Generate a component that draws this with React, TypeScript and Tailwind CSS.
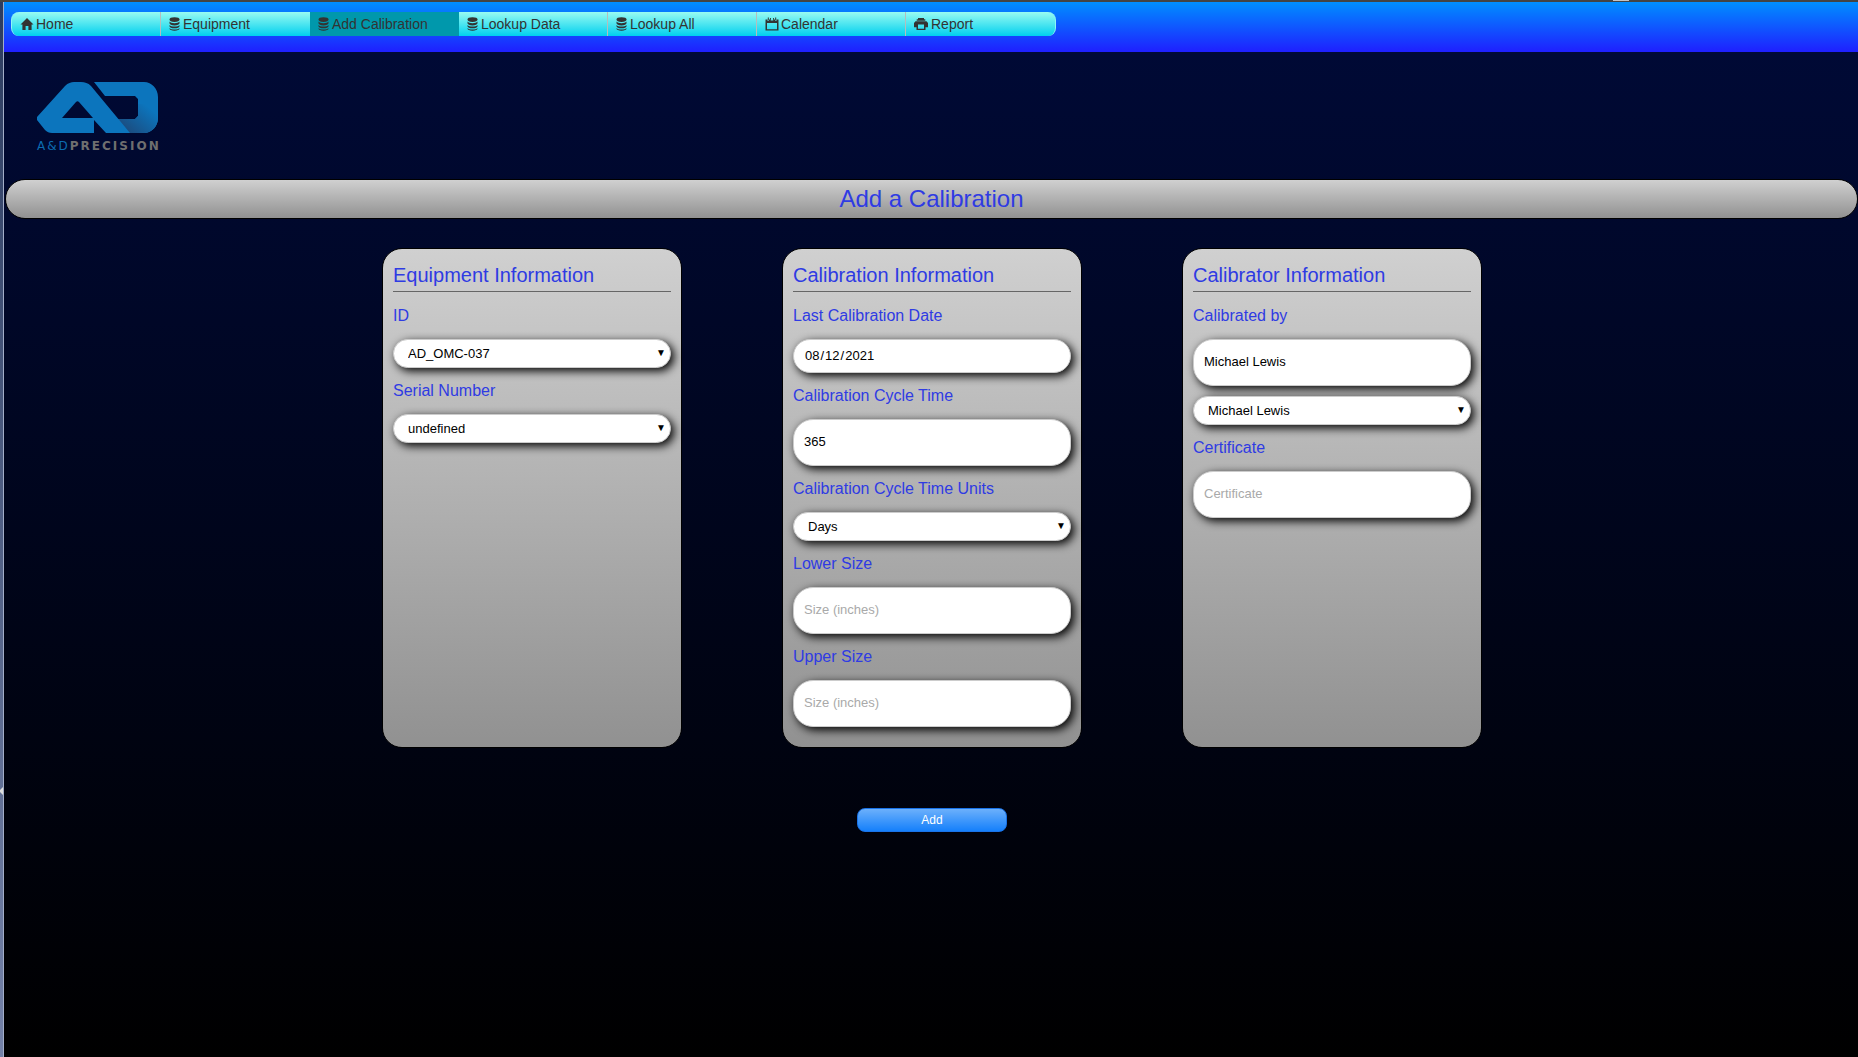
import React from 'react';

type IconName = 'home' | 'database' | 'calendar' | 'print';

function NavIcon({ name }: { name: IconName }) {
  if (name === 'home') {
    return (
      <svg className="h-[14px] w-[14px] shrink-0" viewBox="0 0 14 14" fill="currentColor" aria-hidden="true">
        <path d="M7 1 0.5 7.6h1.9V13h3.2V9h2.8v4h3.2V7.6h1.9z" />
      </svg>
    );
  }
  if (name === 'database') {
    return (
      <svg className="h-[14px] w-[12px] shrink-0" viewBox="0 0 12 14" fill="currentColor" aria-hidden="true">
        <ellipse cx="5.500" cy="2.600" rx="5" ry="2.300" />
        <path d="M.5 4.600c.8 1.100 2.800 1.600 5 1.600s4.200-.5 5-1.600v1.700c0 1.200-2.200 2.100-5 2.100s-5-.9-5-2.100z" />
        <path d="M.5 8c.8 1.100 2.800 1.600 5 1.600s4.200-.5 5-1.600v1.200c0 1.200-2.200 2.100-5 2.100s-5-.9-5-2.100z" />
        <path d="M.5 10.900c.8 1.100 2.800 1.500 5 1.500s4.200-.4 5-1.500v.7c0 1.300-2.200 2.200-5 2.200s-5-.9-5-2.200z" />
      </svg>
    );
  }
  if (name === 'calendar') {
    return (
      <svg className="h-[14px] w-[14px] shrink-0" viewBox="0 0 14 14" fill="currentColor" aria-hidden="true">
        <path
          fillRule="evenodd"
          d="M.5 2.500h2V4h1.500V2.500h1.700V3.500h2.600V2.500H10V4h1.500V2.500h2v11H.5zM2 6v6.200h10V6z"
        />
        <path d="M2.800.5h1V3.500h-1zM10.200.5h1V3.500h-1zM5 .9h.9v1.800H5zM8.100.9H9v1.800h-.9z" />
      </svg>
    );
  }
  return (
    <svg className="h-[14px] w-[15px] shrink-0" viewBox="0 0 15 14" fill="currentColor" aria-hidden="true">
      <path d="M4 1h6v1.200h1.300v1.600H2.700V2.200H4z" />
      <path fillRule="evenodd" d="M1.500 4.300h11L14 6v4.200h-2.500V13h-9v-2.800H0V6zM4 7.500v4.200h6V7.500z" />
    </svg>
  );
}

const navItems: { label: string; icon: IconName; divider?: boolean; active?: boolean }[] = [
  { label: 'Home', icon: 'home', divider: true },
  { label: 'Equipment', icon: 'database' },
  { label: 'Add Calibration', icon: 'database', active: true },
  { label: 'Lookup Data', icon: 'database', divider: true },
  { label: 'Lookup All', icon: 'database', divider: true },
  { label: 'Calendar', icon: 'calendar', divider: true },
  { label: 'Report', icon: 'print' },
];

function NavBar() {
  return (
    <nav className="h-[50px] bg-[linear-gradient(to_bottom,#008fff,#1f1fff)] px-[7px] pt-[10px]">
      <ul className="grid h-6 w-full max-w-[1045px] grid-cols-7 overflow-hidden rounded-lg border-x border-[#8ff5f5] bg-[linear-gradient(to_bottom,#99fbf1,#00d0ef)]">
        {navItems.map((item) => (
          <li
            key={item.label}
            className={item.active ? 'bg-[#0098ac]' : item.divider ? 'border-r border-[#b5bdbd]' : ''}
          >
            <a href="#" className="flex h-6 items-center gap-[2px] pl-2 text-sm text-[#333]">
              <NavIcon name={item.icon} />
              {item.label}
            </a>
          </li>
        ))}
      </ul>
    </nav>
  );
}

function Logo() {
  return (
    <div className="w-[140px]">
      <svg className="block h-[52px] w-[122px]" viewBox="0 0 122 52" role="img" aria-label="A&D Precision logo">
        <defs>
          <linearGradient id="fold" x1="88" y1="50" x2="110" y2="24" gradientUnits="userSpaceOnUse">
            <stop offset="0" stopColor="#1c4a7c" />
            <stop offset="1" stopColor="#0c75bd" />
          </linearGradient>
        </defs>
        <path
          fill="#0c75bd"
          d="M57 0h50c8 0 14 7 14 15v21c0 8-6 15-14 15H92L80 37h18l3-3V17l-3-3H68z"
        />
        <path fill="url(#fold)" d="M80 37h18l3-3V22h20v14c0 8-6 15-14 15H92z" />
        <path
          fill="#0c75bd"
          fillRule="evenodd"
          d="M0 38v-3L28 4c3-3 6-4 9-4h7c4 0 7 1 10 4l39 47H69L57 38v13H15c-3 0-5-1-7-3zM25 36h31L42 20c-1-1-2-1-3 0z"
        />
      </svg>
      <div className="flex pt-1 font-['DejaVu_Sans'] text-xs leading-4 tracking-[2px] whitespace-nowrap">
        <span className="text-[#0c6cb0]">A&amp;D</span>
        <span className="font-bold text-[#6f6f6f]">PRECISION</span>
      </div>
    </div>
  );
}

const controlBase =
  'mb-[10px] block w-full border border-[#ccc] bg-white text-[13px] text-black shadow-[3px_3px_10px_#000] outline-none';

function Label({ htmlFor, children }: { htmlFor: string; children: React.ReactNode }) {
  return (
    <label htmlFor={htmlFor} className="block pb-[10px] text-base leading-[26px] text-[#2f3be3]">
      {children}
    </label>
  );
}

function SelectBox({ id, value, label }: { id: string; value: string; label?: string }) {
  return (
    <div className="relative">
      <select id={id} aria-label={label} className={controlBase + ' h-[29px] appearance-none rounded-[15px] pr-8 pl-[14px]'}>
        <option>{value}</option>
      </select>
      <span className="pointer-events-none absolute top-0 right-[5px] text-[10px] leading-7 text-black">▼</span>
    </div>
  );
}

function TextBox({ id, value, placeholder }: { id: string; value?: string; placeholder?: string }) {
  return (
    <input
      id={id}
      type="text"
      defaultValue={value}
      placeholder={placeholder}
      className={controlBase + ' h-[47px] rounded-[20px] px-[10px] pb-[2px] placeholder:text-[#a9a9a9]'}
    />
  );
}

function Card({ title, children }: { title: string; children: React.ReactNode }) {
  return (
    <section className="min-h-[500px] w-[300px] rounded-[20px] border border-black bg-[linear-gradient(to_bottom,#d0d0d0,#919191)] p-[10px]">
      <h2 className="mb-[11px] border-b border-[#666] text-xl leading-8 text-[#2f3be3]">{title}</h2>
      {children}
    </section>
  );
}

export default function App() {
  return (
    <div className="flex min-h-screen flex-col bg-[#444] font-['Liberation_Sans',Arial,sans-serif]">
      <div className="flex h-[2px] justify-end pr-[229px]">
        <div className="h-px w-4 bg-[#c4c4c4]" />
      </div>
      <div className="flex grow">
        <div className="flex w-1 shrink-0 flex-col border-r border-[#a3aec8] bg-[linear-gradient(to_bottom,#2c3c60,#7482a8)]">
          <div className="grow-3" />
          <svg className="h-2 w-[3px]" viewBox="0 0 3 8" fill="#ddd" aria-hidden="true">
            <path d="M3 0v8L0 5V3z" />
          </svg>
          <div className="grow" />
        </div>
        <div className="min-w-0 grow bg-[linear-gradient(to_bottom,#000a38,#000)]">
          <NavBar />
          <main className="pl-px">
            <div className="px-8 pt-[30px]">
              <Logo />
            </div>
            <h1 className="mt-[25px] h-10 rounded-[20px] border border-black bg-[linear-gradient(to_bottom,#d0d0d0,#919191)] text-center text-2xl leading-[38px] text-[#2f3be3]">
              Add a Calibration
            </h1>
            <form className="pl-px" onSubmit={(e) => e.preventDefault()}>
              <div className="mt-[29px] flex flex-wrap justify-center gap-x-[100px] gap-y-8">
                <Card title="Equipment Information">
                  <Label htmlFor="equipment-id">ID</Label>
                  <SelectBox id="equipment-id" value="AD_OMC-037" />
                  <Label htmlFor="serial">Serial Number</Label>
                  <SelectBox id="serial" value="undefined" />
                </Card>
                <Card title="Calibration Information">
                  <Label htmlFor="date">Last Calibration Date</Label>
                  <input
                    id="date"
                    type="date"
                    defaultValue="2021-08-12"
                    className={controlBase + ' h-[34px] rounded-[20px] px-[10px] [&::-webkit-calendar-picker-indicator]:hidden'}
                  />
                  <Label htmlFor="cycle">Calibration Cycle Time</Label>
                  <TextBox id="cycle" value="365" />
                  <Label htmlFor="units">Calibration Cycle Time Units</Label>
                  <SelectBox id="units" value="Days" />
                  <Label htmlFor="lower">Lower Size</Label>
                  <TextBox id="lower" placeholder="Size (inches)" />
                  <Label htmlFor="upper">Upper Size</Label>
                  <TextBox id="upper" placeholder="Size (inches)" />
                </Card>
                <Card title="Calibrator Information">
                  <Label htmlFor="calibrated-by">Calibrated by</Label>
                  <TextBox id="calibrated-by" value="Michael Lewis" />
                  <SelectBox id="calibrator" label="Calibrator" value="Michael Lewis" />
                  <Label htmlFor="certificate">Certificate</Label>
                  <TextBox id="certificate" placeholder="Certificate" />
                </Card>
              </div>
              <div className="mt-[60px] flex justify-center">
                <button
                  type="submit"
                  className="h-6 w-[150px] rounded-lg border border-[#1a73e8] bg-[linear-gradient(to_bottom,#6cb0fb,#1580fb)] text-xs text-white"
                >
                  Add
                </button>
              </div>
            </form>
          </main>
        </div>
      </div>
    </div>
  );
}
